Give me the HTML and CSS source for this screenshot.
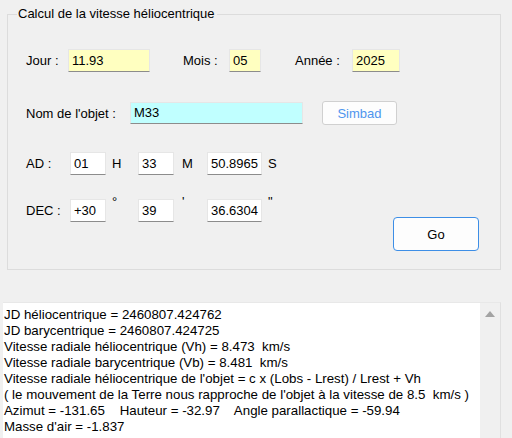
FILE: index.html
```html
<!DOCTYPE html>
<html lang="fr">
<head>
<meta charset="utf-8">
<title>Calcul de la vitesse héliocentrique</title>
<link rel="stylesheet" href="styles.css">
</head>
<body>
<div class="group">
  <div class="legend">Calcul de la vitesse héliocentrique</div>
  <div class="row row-date">
    <span class="lbl l-jour">Jour :</span>
    <span class="box yellow w-jour">11.93</span>
    <span class="lbl l-mois">Mois :</span>
    <span class="box yellow w-mois">05</span>
    <span class="lbl l-annee">Année :</span>
    <span class="box yellow w-annee">2025</span>
  </div>
  <div class="row row-obj">
    <span class="lbl l-nom">Nom de l'objet :</span>
    <span class="box cyan w-nom">M33</span>
    <button class="btn simbad">Simbad</button>
  </div>
  <div class="row row-ad">
    <span class="lbl l-ad">AD :</span>
    <span class="box w-small">01</span>
    <span class="unit u1">H</span>
    <span class="box w-small">33</span>
    <span class="unit u2">M</span>
    <span class="box w-sec">50.8965</span>
    <span class="unit u3">S</span>
  </div>
  <div class="row row-dec">
    <span class="lbl l-ad">DEC :</span>
    <span class="box w-small">+30</span>
    <span class="unit u1 sup">°</span>
    <span class="box w-small">39</span>
    <span class="unit u2 sup">'</span>
    <span class="box w-sec">36.6304</span>
    <span class="unit u3 sup">"</span>
    <button class="btn go">Go</button>
  </div>
</div>
<div class="output">
  <div class="text">
    <div>JD héliocentrique = 2460807.424762</div>
    <div>JD barycentrique = 2460807.424725</div>
    <div>Vitesse radiale héliocentrique (Vh) = 8.473&nbsp; km/s</div>
    <div>Vitesse radiale barycentrique (Vb) = 8.481&nbsp; km/s</div>
    <div>Vitesse radiale héliocentrique de l'objet = c x (Lobs - Lrest) / Lrest + Vh</div>
    <div>( le mouvement de la Terre nous rapproche de l'objet à la vitesse de 8.5&nbsp; km/s )</div>
    <div>Azimut = -131.65&nbsp;&nbsp;&nbsp; Hauteur = -32.97&nbsp;&nbsp;&nbsp; Angle parallactique = -59.94</div>
    <div>Masse d'air = -1.837</div>
  </div>
  <div class="scrollbar"><span class="arrow"></span></div>
</div>
</body>
</html>
```
FILE: styles.css
```css
html, body {
  margin: 0;
  padding: 0;
  background: #f0f0f0;
  width: 512px;
  height: 438px;
  overflow: hidden;
}
body {
  font-family: "Liberation Sans", Arial, sans-serif;
  font-size: 13px;
  color: #000;
  padding-top: 14px;
  box-sizing: border-box;
}
.group {
  margin-left: 7px;
  width: 494px;
  height: 256px;
  box-sizing: border-box;
  border: 1px solid #dcdcdc;
  padding: 0 0 0 18px;
}
.legend {
  display: block;
  width: fit-content;
  margin-top: -9px;
  margin-left: -9px;
  padding: 0 2px 0 1px;
  background: #f0f0f0;
  line-height: 16px;
  height: 16px;
}
.row {
  display: flex;
  align-items: center;
  height: 23px;
}
.row-date { margin-top: 27px; }
.row-obj { margin-top: 29px; height: 24px; }
.row-ad { margin-top: 27px; }
.row-dec { margin-top: 24px; align-items: flex-start; }
.lbl { white-space: nowrap; }
.l-jour { width: 42px; }
.l-mois { width: 46px; margin-left: 33px; }
.l-annee { width: 57px; margin-left: 34px; }
.l-nom { width: 104px; }
.l-ad { width: 44px; }
.row-dec .lbl, .row-dec .unit { line-height: 23px; }
.box {
  box-sizing: border-box;
  height: 23px;
  line-height: 21px;
  padding-left: 3px;
  background: #fff;
  border: 1px solid #e6e6e6;
  border-bottom-color: #8c8c8c;
  white-space: nowrap;
  overflow: hidden;
}
.yellow { background: #ffffc0; }
.cyan { background: #c0ffff; height: 22px; line-height: 20px; }
.w-jour { width: 82px; }
.w-mois { width: 32px; }
.w-annee { width: 48px; }
.w-nom { width: 173px; }
.w-small { width: 36px; }
.w-sec { width: 55px; }
.unit { box-sizing: border-box; }
.u1 { width: 32px; padding-left: 6px; }
.u2 { width: 33px; padding-left: 8px; }
.u3 { padding-left: 6px; }
.sup { line-height: 13px !important; margin-top: -4px; }
.btn {
  font-family: "Liberation Sans", Arial, sans-serif;
  font-size: 13px;
  background: #fdfdfd;
  padding: 0;
  cursor: default;
}
.simbad {
  margin-left: 19px;
  width: 75px;
  height: 24px;
  border: 1px solid #d0d0d0;
  border-radius: 3px;
  color: #4f95ee;
}
.go {
  margin-left: auto;
  margin-right: 21px;
  margin-top: 18px;
  width: 86px;
  height: 34px;
  border: 1px solid #3d8ee6;
  border-radius: 4px;
  color: #000;
}
.output {
  margin-top: 32px;
  margin-left: 3px;
  width: 498px;
  height: 140px;
  background: #fff;
  border-top: 1px solid #e8e8e8;
  border-right: 1px solid #e0e0e0;
  box-sizing: border-box;
  display: flex;
}
.text {
  flex: 1;
  padding: 4px 0 0 1px;
  font-size: 13.3px;
  line-height: 16px;
  white-space: nowrap;
  overflow: hidden;
}
.scrollbar {
  width: 20px;
  background: #f0f0f0;
  display: flex;
  justify-content: center;
  padding-top: 8px;
  box-sizing: border-box;
}
.arrow {
  width: 0;
  height: 0;
  border-left: 5px solid transparent;
  border-right: 5px solid transparent;
  border-bottom: 6px solid #a3a3a3;
}
```
